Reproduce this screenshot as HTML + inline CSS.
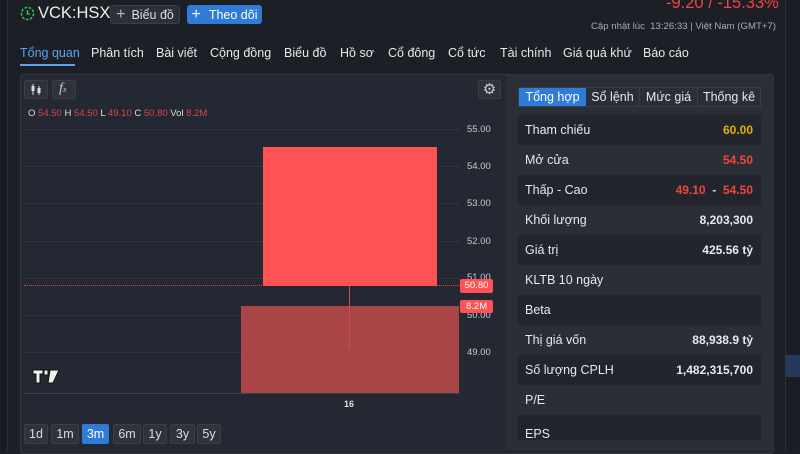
<!DOCTYPE html>
<html><head><meta charset="utf-8"><style>
*{margin:0;padding:0;box-sizing:border-box}
body{width:800px;height:450px;overflow:hidden;background:#1c1f26;font-family:"Liberation Sans","Noto Sans CJK SC",sans-serif;color:#e6e8ec;position:relative}
.abs{position:absolute}
.btn{position:absolute;border-radius:3px;font-size:12.5px;display:flex;align-items:center;justify-content:center}
.tab{position:absolute;top:46px;font-size:12.5px;color:#e8e8e8}
.tf{position:absolute;top:424px;height:20px;background:#2f333c;border:1px solid #3a3e47;border-radius:2px;font-size:12.5px;color:#ddd;display:flex;align-items:center;justify-content:center}
.row{position:absolute;left:518px;width:243px;height:30px;font-size:12.5px;display:flex;align-items:center;justify-content:space-between;padding:0 8px 0 7px}
.row.d{background:#22252d}
.row b{font-weight:bold;font-size:12px}
.pl{position:absolute;left:467px;font-size:9.5px;color:#c8cad0}
.grid{position:absolute;left:24px;width:435px;border-top:1px dotted #3a3e47}
</style></head><body>
<div class="abs" style="left:0;top:0;width:8px;height:450px;background:#181b20;border-right:1px solid #2c3038"></div>
<div class="abs" style="left:785px;top:0;width:15px;height:450px;background:#1a1d23;border-left:1px solid #2c3038"></div>
<div class="abs" style="left:786px;top:355px;width:14px;height:22px;background:#243a5c"></div>

<svg class="abs" style="left:20px;top:6px" width="15" height="15" viewBox="0 0 16 16"><circle cx="8" cy="8" r="6.5" fill="none" stroke="#2fbf4a" stroke-width="1.6" stroke-dasharray="3 1.5"/><path d="M8 4.5V8.5H10.5" fill="none" stroke="#2fbf4a" stroke-width="1.6"/></svg>
<div class="abs" style="left:38px;top:4px;font-size:16.5px;color:#eee">VCK:HSX</div>
<div class="btn" style="left:110px;top:5px;width:70px;height:19px;background:#2c3038;border:1px solid #3a3e46;color:#ddd"><span style="font-size:16px;margin-right:6px;color:#bbb">+</span>Biểu đồ</div>
<div class="btn" style="left:187px;top:5px;width:75px;height:19px;background:#2f7bd9;color:#fff"><span style="font-size:16px;margin-right:8px">+</span>Theo dõi</div>
<div class="abs" style="left:666px;top:-6px;font-size:16.5px;color:#f0463c">-9.20 / -15.33%</div>
<div class="abs" style="left:591px;top:21px;font-size:9.6px;color:#a8abb2">Cập nhật lúc&nbsp; 13:26:33 | Việt Nam (GMT+7)</div>

<div class="tab" style="left:20px;color:#5ba3f0">Tổng quan</div>
<div class="abs" style="left:20px;top:64px;width:55px;height:2px;background:#5ba3f0"></div>
<div class="tab" style="left:91px">Phân tích</div>
<div class="tab" style="left:156px">Bài viết</div>
<div class="tab" style="left:210px">Cộng đồng</div>
<div class="tab" style="left:284px">Biểu đồ</div>
<div class="tab" style="left:340px">Hồ sơ</div>
<div class="tab" style="left:388px">Cổ đông</div>
<div class="tab" style="left:448px">Cổ tức</div>
<div class="tab" style="left:500px">Tài chính</div>
<div class="tab" style="left:563px">Giá quá khứ</div>
<div class="tab" style="left:643px">Báo cáo</div>

<div class="abs" style="left:20px;top:74px;width:754px;height:380px;background:#242832;border:1px solid #31353e;border-radius:3px"></div>
<div class="abs" style="left:506px;top:75px;width:267px;height:375px;background:#2a2e37"></div>

<div class="abs" style="left:24px;top:80px;width:24px;height:19px;background:#2e323b;border:1px solid #3a3e47;border-radius:2px"></div>
<svg class="abs" style="left:29px;top:83px" width="14" height="13"><path d="M4 1v11M10 3v9" stroke="#ddd"/><rect x="2.5" y="3" width="3" height="5" fill="#ddd"/><rect x="8.5" y="5" width="3" height="5" fill="#ddd"/></svg>
<div class="abs" style="left:52px;top:80px;width:24px;height:19px;background:#2e323b;border:1px solid #3a3e47;border-radius:2px;font-family:'Liberation Serif',serif;font-style:italic;font-size:14px;color:#ccc;padding-left:6px">f<span style="font-size:8px">x</span></div>
<div class="abs" style="left:478px;top:80px;width:23px;height:19px;background:#2e323b;border:1px solid #3a3e47;border-radius:2px;color:#ccc;font-size:15px;text-align:center;line-height:18px">⚙</div>

<div class="abs" style="left:28px;top:108px;font-size:9.5px;color:#ddd">O <span style="color:#d9454a">54.50</span> H <span style="color:#d9454a">54.50</span> L <span style="color:#d9454a">49.10</span> C <span style="color:#d9454a">50.80</span> Vol <span style="color:#d9454a">8.2M</span></div>

<div class="grid" style="top:129px"></div><div class="grid" style="top:166px"></div><div class="grid" style="top:203px"></div><div class="grid" style="top:241px"></div><div class="grid" style="top:278px"></div><div class="grid" style="top:315px"></div><div class="grid" style="top:352px"></div>
<div class="pl" style="top:124px">55.00</div><div class="pl" style="top:161px">54.00</div><div class="pl" style="top:198px">53.00</div><div class="pl" style="top:236px">52.00</div><div class="pl" style="top:272px">51.00</div><div class="pl" style="top:310px">50.00</div><div class="pl" style="top:347px">49.00</div>
<div class="abs" style="left:24px;top:285px;width:438px;border-top:1px dotted #d9454a"></div>
<div class="abs" style="left:241px;top:306px;width:218px;height:87px;background:#a94447"></div>
<div class="abs" style="left:263px;top:147px;width:174px;height:139px;background:#ff5252"></div>
<div class="abs" style="left:349px;top:286px;width:1px;height:63px;background:#d14a4c"></div>
<div class="abs" style="left:460px;top:279px;width:33px;height:14px;background:#ff5252;border-radius:2px;font-size:9.5px;color:#fff;text-align:center;line-height:14px">50.80</div>
<div class="abs" style="left:460px;top:300px;width:33px;height:13px;background:#ff5252;border-radius:2px;font-size:9.5px;color:#fff;padding-left:6px;line-height:13px">8.2M</div>
<div class="abs" style="left:24px;top:393px;width:436px;height:1px;background:#3a3e46"></div>
<div class="abs" style="left:344px;top:399px;font-size:9px;font-weight:bold;color:#ddd">16</div>
<svg class="abs" style="left:32px;top:369px" width="28" height="15"><path d="M1 1h10v4h-3v9h-4v-9h-3z M12 1h4v5h-4z M18 1h9l-6 13h-5z" fill="#f0f0f0" stroke="#111" stroke-width="1"/></svg>

<div class="tf" style="left:24px;width:24px">1d</div>
<div class="tf" style="left:51px;width:28px">1m</div>
<div class="tf" style="left:82px;width:27px;background:#2f7bd9;border-color:#2f7bd9;color:#fff">3m</div>
<div class="tf" style="left:113px;width:28px">6m</div>
<div class="tf" style="left:143px;width:24px">1y</div>
<div class="tf" style="left:170px;width:25px">3y</div>
<div class="tf" style="left:197px;width:24px">5y</div>

<div class="abs" style="left:518px;top:87px;width:243px;height:20px;border:1px solid #3a3e47;border-radius:2px;background:#2a2e37;display:flex;font-size:12.5px">
<div style="width:67px;background:#2f7bd9;color:#fff;text-align:center;line-height:18px">Tổng hợp</div>
<div style="width:54px;text-align:center;line-height:18px;border-right:1px solid #3a3e47">Sổ lệnh</div>
<div style="width:58px;text-align:center;line-height:18px;border-right:1px solid #3a3e47">Mức giá</div>
<div style="flex:1;text-align:center;line-height:18px">Thống kê</div></div>

<div class="row d" style="top:115px"><span>Tham chiếu</span><b style="color:#e0b200">60.00</b></div>
<div class="row" style="top:145px"><span>Mở cửa</span><b style="color:#f0463c">54.50</b></div>
<div class="row d" style="top:175px"><span>Thấp - Cao</span><b style="color:#f0463c">49.10 <span style="color:#ddd">&nbsp;-&nbsp;</span> 54.50</b></div>
<div class="row" style="top:205px"><span>Khối lượng</span><b>8,203,300</b></div>
<div class="row d" style="top:235px"><span>Giá trị</span><b>425.56 tỷ</b></div>
<div class="row" style="top:265px"><span>KLTB 10 ngày</span></div>
<div class="row d" style="top:295px"><span>Beta</span></div>
<div class="row" style="top:325px"><span>Thị giá vốn</span><b>88,938.9 tỷ</b></div>
<div class="row d" style="top:355px"><span>Số lượng CPLH</span><b>1,482,315,700</b></div>
<div class="row" style="top:385px"><span>P/E</span></div>
<div class="row d" style="top:415px;height:25px;padding-top:12px"><span>EPS</span></div>
</body></html>
